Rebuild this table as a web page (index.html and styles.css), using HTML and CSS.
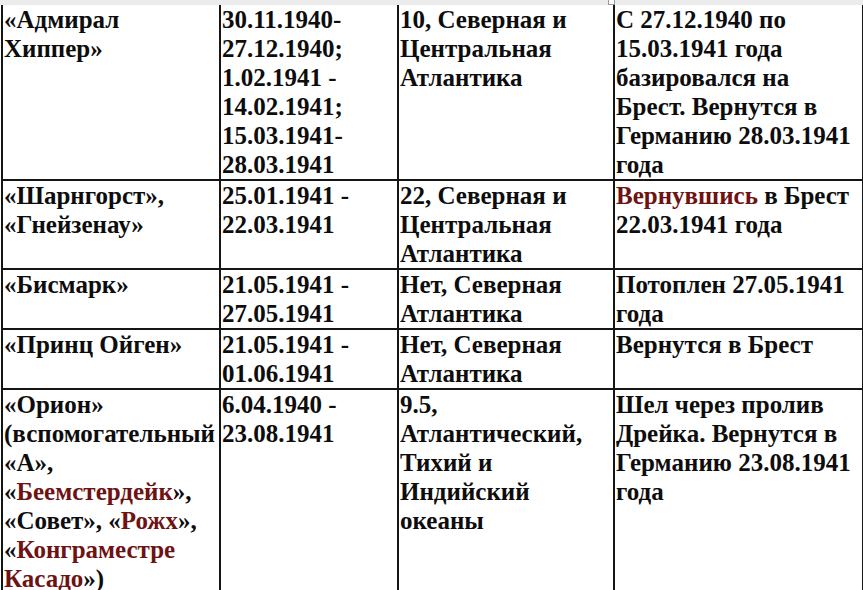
FILE: index.html
```html
<!DOCTYPE html>
<html>
<head>
<meta charset="utf-8">
<title>table</title>
<link rel="stylesheet" href="styles.css">
</head>
<body>
<div class="ruler"><div class="handle"></div></div>
<table class="grid">
  <colgroup>
    <col class="c1"><col class="c2"><col class="c3"><col class="c4">
  </colgroup>
  <tr>
    <td class="s">«Адмирал<br>Хиппер»</td>
    <td class="s">30.11.1940-<br>27.12.1940;<br>1.02.1941 -<br>14.02.1941;<br>15.03.1941-<br>28.03.1941</td>
    <td class="s">10, Северная и<br>Центральная<br>Атлантика</td>
    <td class="s">С 27.12.1940 по<br>15.03.1941 года<br>базировался на<br>Брест. Вернутся в<br>Германию 28.03.1941<br>года</td>
  </tr>
  <tr>
    <td class="s">«Шарнгорст»,<br>«Гнейзенау»</td>
    <td class="s">25.01.1941 -<br>22.03.1941</td>
    <td class="s">22, Северная и<br>Центральная<br>Атлантика</td>
    <td class="s"><span class="red">Вернувшись</span> в Брест<br>22.03.1941 года</td>
  </tr>
  <tr>
    <td class="s">«Бисмарк»</td>
    <td class="s">21.05.1941 -<br>27.05.1941</td>
    <td class="s">Нет, Северная<br>Атлантика</td>
    <td class="s">Потоплен 27.05.1941<br>года</td>
  </tr>
  <tr>
    <td class="s">«Принц Ойген»</td>
    <td class="s">21.05.1941 -<br>01.06.1941</td>
    <td class="s">Нет, Северная<br>Атлантика</td>
    <td class="s">Вернутся в Брест</td>
  </tr>
  <tr>
    <td class="s">«Орион»<br>(вспомогательный<br>«А»,<br>«<span class="red">Беемстердейк</span>»,<br>«Совет», «<span class="red">Рожх</span>»,<br>«<span class="red">Конграместре</span><br><span class="red">Касадо</span>»)</td>
    <td class="s">6.04.1940 -<br>23.08.1941</td>
    <td class="s">9.5,<br>Атлантический,<br>Тихий и<br>Индийский<br>океаны</td>
    <td class="s">Шел через пролив<br>Дрейка. Вернутся в<br>Германию 23.08.1941<br>года</td>
  </tr>
</table>
</body>
</html>
```

FILE: styles.css
```css
body {
  margin: 0;
  font-size: 25px;
  font-weight: bold;
}

.ruler {
  display: flex;
  height: 5px;
  background: #ececec;
}

.handle {
  margin-left: 608px;
  width: 5px;
  height: 4px;
  border: 1px solid #9a9a9a;
  border-top: 0;
  background: #ffffff;
}

.grid {
  margin-left: 1px;
  border-collapse: collapse;
  table-layout: fixed;
  width: 861px;
}

.c1 { width: 218px; }
.c2 { width: 178px; }
.c3 { width: 216px; }
.c4 { width: 249px; }

.s {
  font-family: "Liberation Serif";
  line-height: 29px;
  color: #0d0d0d;
  padding: 0 0 0 1px;
  vertical-align: top;
  white-space: nowrap;
  border: 2px solid #151515;
}

.grid tr:first-child .s {
  border-top: 0;
}

.red {
  color: #6e1212;
}
```
